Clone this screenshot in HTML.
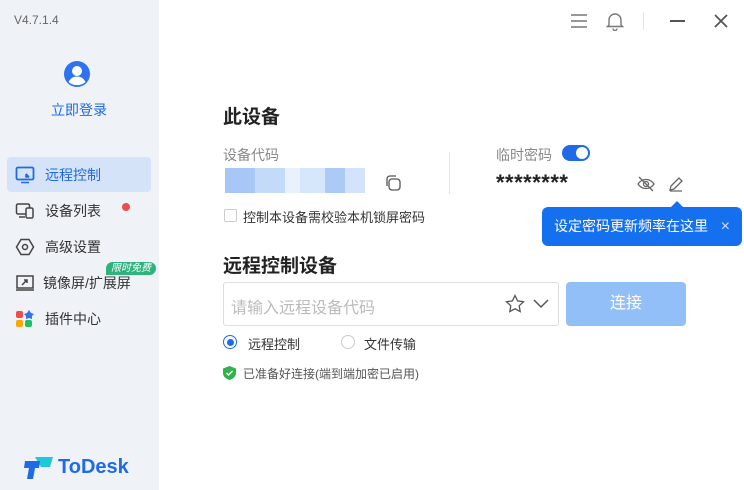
<!DOCTYPE html>
<html><head><meta charset="utf-8"><style>
*{margin:0;padding:0;box-sizing:border-box}
body{width:744px;height:490px;overflow:hidden;background:#fff;font-family:"Liberation Sans","Noto Sans CJK SC",sans-serif;position:relative;color:#333}
.side{position:absolute;left:0;top:0;width:159px;height:490px;background:#eff2f7}
.abs{position:absolute}
.ver{left:14px;top:13px;font-size:12px;color:#666}
.nav{left:7px;width:144px;height:35px;font-size:14px;color:#333;display:flex;align-items:center;padding-left:8px;border-radius:4px}
.nav svg{margin-right:10px}
.nav.act{background:#d5e3f8;color:#1f6ae6}
.t{font-size:14px;color:#888}
</style></head><body>
<div class="side">
<div class="abs ver">V4.7.1.4</div>
<svg class="abs" style="left:64px;top:61px" width="26" height="26" viewBox="0 0 26 26"><circle cx="13" cy="13" r="13" fill="#2f72f0"/><circle cx="13" cy="10" r="5" fill="#fff"/><path d="M4.5 21c2-4 5-5.5 8.5-5.5s6.5 1.5 8.5 5.5a13 13 0 0 1-17 0z" fill="#fff"/></svg>
<div class="abs" style="left:51px;top:100px;font-size:14px;color:#1f6ae6">立即登录</div>
<div class="abs nav act" style="top:157px"><svg width="20" height="18" viewBox="0 0 20 18"><rect x="1.5" y="1.5" width="17" height="12" rx="1.5" fill="none" stroke="#1f6ae6" stroke-width="1.8"/><path d="M6 16.5h8M11 8l3 3M11 8v3h3" stroke="#1f6ae6" stroke-width="1.6" fill="none"/></svg>远程控制</div>
<div class="abs nav" style="top:193px"><svg width="20" height="18" viewBox="0 0 20 18"><rect x="1.5" y="2" width="13" height="10" rx="1.5" fill="none" stroke="#444" stroke-width="1.5"/><rect x="11" y="6" width="7" height="10" rx="1.5" fill="#eff2f7" stroke="#444" stroke-width="1.5"/><path d="M4 15h6" stroke="#444" stroke-width="1.5"/></svg>设备列表</div>
<div class="abs" style="left:122px;top:203px;width:8px;height:8px;border-radius:50%;background:#e94d4d"></div>
<div class="abs nav" style="top:229px"><svg width="20" height="18" viewBox="0 0 20 18"><path d="M6 1.5h8l4.5 7.5-4.5 7.5H6L1.5 9z" fill="none" stroke="#444" stroke-width="1.5"/><circle cx="10" cy="9" r="2.5" fill="none" stroke="#444" stroke-width="1.5"/></svg>高级设置</div>
<div class="abs nav" style="top:265px"><svg width="20" height="18" viewBox="0 0 20 18"><rect x="2" y="2" width="16" height="12" fill="none" stroke="#444" stroke-width="1.5"/><path d="M1 16h18M7 11l5-5M9 6h3v3" stroke="#444" stroke-width="1.5" fill="none"/></svg><span style="margin-left:-2px">镜像屏/扩展屏</span></div>
<div class="abs" style="left:106px;top:262px;background:#2fb37d;color:#fff;font-size:10px;padding:0 5px;height:13px;line-height:13px;border-radius:7px 7px 7px 0;font-style:italic">限时免费</div>
<div class="abs nav" style="top:301px"><svg width="20" height="18" viewBox="0 0 20 18"><rect x="1" y="1" width="7" height="7" rx="2" fill="#ef4d4d"/><path d="M14 0l2 3 3 1-2 2 0 3-3-1-3 1 0-3-2-2 3-1z" fill="#2f72f0"/><rect x="1" y="10" width="7" height="7" rx="2" fill="#ffa500"/><rect x="10" y="10" width="7" height="7" rx="2" fill="#20c060"/></svg>插件中心</div>
<svg class="abs" style="left:24px;top:456px" width="30" height="24" viewBox="0 0 30 24"><path d="M11 1h18l-3 10h-9z" fill="#1dc8d8"/><path d="M1 5h15l-1 7h-4l-2 11H3l2-11H0z" fill="#1f6ae6"/></svg>
<div class="abs" style="left:58px;top:456px;font-size:20px;font-weight:bold;color:#1f6ae6">ToDesk</div>
</div>
<svg class="abs" style="left:570px;top:13px" width="18" height="16"><path d="M1 2h16M1 8h16M1 14h16" stroke="#777" stroke-width="1.4"/></svg>
<svg class="abs" style="left:606px;top:11px" width="18" height="20"><path d="M3 14V9a6 6 0 0 1 12 0v5l1.5 1.5h-15zM7 17.5a2 2 0 0 0 4 0" fill="none" stroke="#777" stroke-width="1.4"/></svg>
<div class="abs" style="left:643px;top:12px;width:1px;height:18px;background:#e5e5e5"></div>
<div class="abs" style="left:670px;top:20px;width:15px;height:2px;background:#555"></div>
<svg class="abs" style="left:713px;top:13px" width="16" height="16"><path d="M2 2l12 12M14 2L2 14" stroke="#555" stroke-width="1.8"/></svg>
<div class="abs" style="left:223px;top:102px;font-size:19px;font-weight:bold;color:#222">此设备</div>
<div class="abs t" style="left:223px;top:145px">设备代码</div>
<div class="abs" style="left:225px;top:168px;width:140px;height:25px;background:linear-gradient(90deg,#a7c8f7 0 30px,#c3daf9 30px 60px,#e8f1fd 60px 75px,#d6e6fb 75px 100px,#abcaf6 100px 120px,#d2e3fb 120px 140px)"></div>
<svg class="abs" style="left:384px;top:174px" width="18" height="18"><rect x="5" y="5" width="11" height="11" rx="3" fill="none" stroke="#555" stroke-width="1.3"/><path d="M3 12V5a3 3 0 0 1 3-3h6" fill="none" stroke="#555" stroke-width="1.3"/></svg>
<div class="abs" style="left:449px;top:152px;width:1px;height:42px;background:#e5e5e5"></div>
<div class="abs t" style="left:496px;top:145px">临时密码</div>
<div class="abs" style="left:562px;top:145px;width:28px;height:16px;border-radius:8px;background:#1f6ae6"><div style="position:absolute;right:2px;top:2px;width:12px;height:12px;border-radius:50%;background:#fff"></div></div>
<div class="abs" style="left:496px;top:172px;font-size:22px;line-height:22px;height:18px;overflow:visible;font-weight:bold;color:#222;letter-spacing:0.5px">********</div>
<svg class="abs" style="left:636px;top:176px" width="20" height="16"><path d="M2 8c4-6 12-6 16 0-4 6-12 6-16 0z" fill="none" stroke="#666" stroke-width="1.3"/><circle cx="10" cy="8" r="2.5" fill="none" stroke="#666" stroke-width="1.3"/><path d="M3 1l14 14" stroke="#666" stroke-width="1.3"/></svg>
<svg class="abs" style="left:667px;top:175px" width="18" height="18"><path d="M3 15l1-4 8-8 3 3-8 8zM3 16h12" fill="none" stroke="#666" stroke-width="1.3"/></svg>
<div class="abs" style="left:224px;top:209px;width:13px;height:13px;border:1px solid #ccc;border-radius:2px"></div>
<div class="abs" style="left:243px;top:207px;font-size:13px;color:#333">控制本设备需校验本机锁屏密码</div>
<div class="abs" style="left:670px;top:201px;width:0;height:0;border-left:7px solid transparent;border-right:7px solid transparent;border-bottom:7px solid #1570ef"></div>
<div class="abs" style="left:542px;top:207px;width:200px;height:39px;border-radius:6px;background:#1570ef;color:#fff;font-size:14px;line-height:39px;padding-left:12px">设定密码更新频率在这里<span style="position:absolute;right:12px;font-size:16px;color:#cfe0ff">×</span></div>
<div class="abs" style="left:223px;top:251px;font-size:19px;font-weight:bold;color:#222">远程控制设备</div>
<div class="abs" style="left:223px;top:282px;width:336px;height:44px;border:1px solid #ddd;border-radius:3px"></div>
<div class="abs" style="left:231px;top:294px;font-size:16px;color:#bbb">请输入远程设备代码</div>
<svg class="abs" style="left:505px;top:294px" width="20" height="19"><path d="M10 1.5l2.6 5.4 5.9.8-4.3 4.1 1 5.8L10 14.8l-5.2 2.8 1-5.8L1.5 7.7l5.9-.8z" fill="none" stroke="#555" stroke-width="1.3"/></svg>
<svg class="abs" style="left:532px;top:297px" width="18" height="12"><path d="M2 3l7 7 7-7" fill="none" stroke="#555" stroke-width="1.5"/></svg>
<div class="abs" style="left:566px;top:282px;width:120px;height:44px;border-radius:4px;background:#93bff9;color:#fff;font-size:16px;text-align:center;line-height:44px">连接</div>
<div class="abs" style="left:223px;top:335px;width:14px;height:14px;border-radius:50%;border:1px solid #1f6ae6"><div style="margin:2.5px;width:7px;height:7px;border-radius:50%;background:#1f6ae6"></div></div>
<div class="abs" style="left:248px;top:334px;font-size:13px;color:#333">远程控制</div>
<div class="abs" style="left:341px;top:335px;width:14px;height:14px;border-radius:50%;border:1px solid #ccc"></div>
<div class="abs" style="left:364px;top:334px;font-size:13px;color:#333">文件传输</div>
<svg class="abs" style="left:223px;top:366px" width="13" height="14"><path d="M6.5 0L13 2.5V7c0 3.5-3 6-6.5 7C3 13 0 10.5 0 7V2.5z" fill="#2fb34a"/><path d="M3.5 7l2 2 4-4" stroke="#fff" stroke-width="1.5" fill="none"/></svg>
<div class="abs" style="left:243px;top:365px;font-size:12px;color:#555">已准备好连接(端到端加密已启用)</div>
</body></html>
